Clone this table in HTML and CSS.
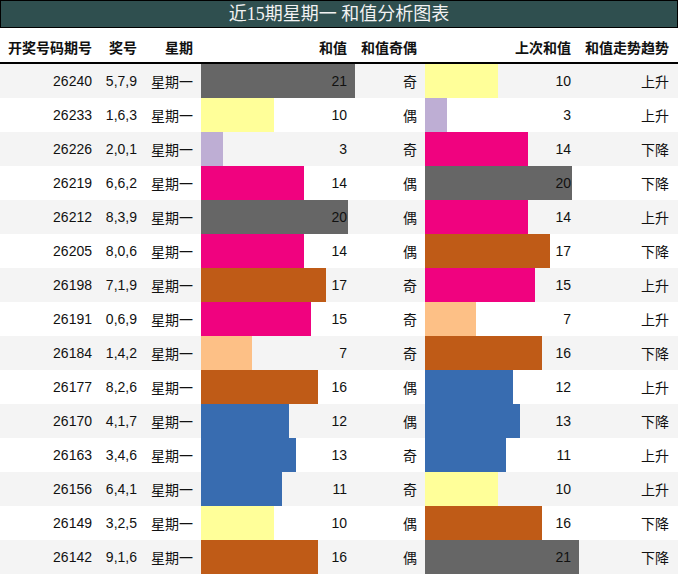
FILE: index.html
```html
<!DOCTYPE html>
<html lang="zh">
<head>
<meta charset="utf-8">
<title>近15期星期一 和值分析图表</title>
<link rel="stylesheet" href="styles.css">
</head>
<body>
<div class="title">近15期星期一 和值分析图表</div>
<table class="chart">
  <colgroup>
    <col class="c1"><col class="c2"><col class="c3"><col class="c4"><col class="c5"><col class="c6"><col class="c7">
  </colgroup>
  <thead>
    <tr><th>开奖号码期号</th><th>奖号</th><th>星期</th><th>和值</th><th>和值奇偶</th><th>上次和值</th><th>和值走势趋势</th></tr>
  </thead>
  <tbody>
    <tr><td>26240</td><td>5,7,9</td><td>星期一</td><td class="barcell"><div class="bar v21" style="width:154px"></div><span>21</span></td><td>奇</td><td class="barcell"><div class="bar v10" style="width:73px"></div><span>10</span></td><td>上升</td></tr>
    <tr><td>26233</td><td>1,6,3</td><td>星期一</td><td class="barcell"><div class="bar v10" style="width:73px"></div><span>10</span></td><td>偶</td><td class="barcell"><div class="bar v3" style="width:22px"></div><span>3</span></td><td>上升</td></tr>
    <tr><td>26226</td><td>2,0,1</td><td>星期一</td><td class="barcell"><div class="bar v3" style="width:22px"></div><span>3</span></td><td>奇</td><td class="barcell"><div class="bar v14" style="width:103px"></div><span>14</span></td><td>下降</td></tr>
    <tr><td>26219</td><td>6,6,2</td><td>星期一</td><td class="barcell"><div class="bar v14" style="width:103px"></div><span>14</span></td><td>偶</td><td class="barcell"><div class="bar v21" style="width:147px"></div><span>20</span></td><td>下降</td></tr>
    <tr><td>26212</td><td>8,3,9</td><td>星期一</td><td class="barcell"><div class="bar v21" style="width:147px"></div><span>20</span></td><td>偶</td><td class="barcell"><div class="bar v14" style="width:103px"></div><span>14</span></td><td>上升</td></tr>
    <tr><td>26205</td><td>8,0,6</td><td>星期一</td><td class="barcell"><div class="bar v14" style="width:103px"></div><span>14</span></td><td>偶</td><td class="barcell"><div class="bar v16" style="width:125px"></div><span>17</span></td><td>下降</td></tr>
    <tr><td>26198</td><td>7,1,9</td><td>星期一</td><td class="barcell"><div class="bar v16" style="width:125px"></div><span>17</span></td><td>奇</td><td class="barcell"><div class="bar v14" style="width:110px"></div><span>15</span></td><td>上升</td></tr>
    <tr><td>26191</td><td>0,6,9</td><td>星期一</td><td class="barcell"><div class="bar v14" style="width:110px"></div><span>15</span></td><td>奇</td><td class="barcell"><div class="bar v7" style="width:51px"></div><span>7</span></td><td>上升</td></tr>
    <tr><td>26184</td><td>1,4,2</td><td>星期一</td><td class="barcell"><div class="bar v7" style="width:51px"></div><span>7</span></td><td>奇</td><td class="barcell"><div class="bar v16" style="width:117px"></div><span>16</span></td><td>下降</td></tr>
    <tr><td>26177</td><td>8,2,6</td><td>星期一</td><td class="barcell"><div class="bar v16" style="width:117px"></div><span>16</span></td><td>偶</td><td class="barcell"><div class="bar v12" style="width:88px"></div><span>12</span></td><td>上升</td></tr>
    <tr><td>26170</td><td>4,1,7</td><td>星期一</td><td class="barcell"><div class="bar v12" style="width:88px"></div><span>12</span></td><td>偶</td><td class="barcell"><div class="bar v12" style="width:95px"></div><span>13</span></td><td>下降</td></tr>
    <tr><td>26163</td><td>3,4,6</td><td>星期一</td><td class="barcell"><div class="bar v12" style="width:95px"></div><span>13</span></td><td>奇</td><td class="barcell"><div class="bar v12" style="width:81px"></div><span>11</span></td><td>上升</td></tr>
    <tr><td>26156</td><td>6,4,1</td><td>星期一</td><td class="barcell"><div class="bar v12" style="width:81px"></div><span>11</span></td><td>奇</td><td class="barcell"><div class="bar v10" style="width:73px"></div><span>10</span></td><td>上升</td></tr>
    <tr><td>26149</td><td>3,2,5</td><td>星期一</td><td class="barcell"><div class="bar v10" style="width:73px"></div><span>10</span></td><td>偶</td><td class="barcell"><div class="bar v16" style="width:117px"></div><span>16</span></td><td>下降</td></tr>
    <tr><td>26142</td><td>9,1,6</td><td>星期一</td><td class="barcell"><div class="bar v16" style="width:117px"></div><span>16</span></td><td>偶</td><td class="barcell"><div class="bar v21" style="width:154px"></div><span>21</span></td><td>下降</td></tr>
  </tbody>
</table>
</body>
</html>
```
FILE: styles.css
```css
html, body {
  margin: 0;
  padding: 0;
  background: #ffffff;
}
body {
  width: 678px;
  font-family: "Liberation Sans", "Noto Sans CJK SC", sans-serif;
  font-size: 14px;
  color: #111;
}
.title {
  box-sizing: border-box;
  height: 28px;
  background: #2f4f4f;
  border: 1px solid #000;
  color: #f2f2f2;
  font-family: "Liberation Serif", "Noto Sans CJK SC", serif;
  font-size: 18px;
  line-height: 26px;
  text-align: center;
}
.chart {
  width: 678px;
  border-collapse: collapse;
  table-layout: fixed;
}
.c1 { width: 100px; }
.c2 { width: 45px; }
.c3 { width: 56px; }
.c4 { width: 154px; }
.c5 { width: 70px; }
.c6 { width: 154px; }
.c7 { width: 99px; }
.chart th {
  height: 35px;
  padding: 3px 8px 0 0;
  box-sizing: border-box;
  text-align: right;
  font-weight: bold;
  border-bottom: 2px solid #000;
  white-space: nowrap;
}
.chart th:last-child { padding-right: 9px; }
.chart td {
  height: 34px;
  padding: 0 8px 0 0;
  box-sizing: border-box;
  text-align: right;
  white-space: nowrap;
  vertical-align: middle;
}
.chart td:last-child { padding-right: 9px; }
.chart tbody tr:nth-child(odd) { background: #f4f4f4; }
.chart tbody tr:nth-child(even) { background: #ffffff; }
.chart td.barcell {
  padding: 0;
}
.barcell {
  display: grid;
  height: 34px;
  align-items: center;
}
.barcell .bar,
.barcell span {
  grid-area: 1 / 1;
}
.barcell .bar {
  height: 34px;
  justify-self: start;
}
.barcell span {
  justify-self: end;
  padding-right: 8px;
}
.v3 { background: #beaed4; }
.v7 { background: #fdc086; }
.v10 { background: #ffff99; }
.v12 { background: #386cb0; }
.v14 { background: #f0027f; }
.v16 { background: #bf5b17; }
.v21 { background: #666666; }
```
